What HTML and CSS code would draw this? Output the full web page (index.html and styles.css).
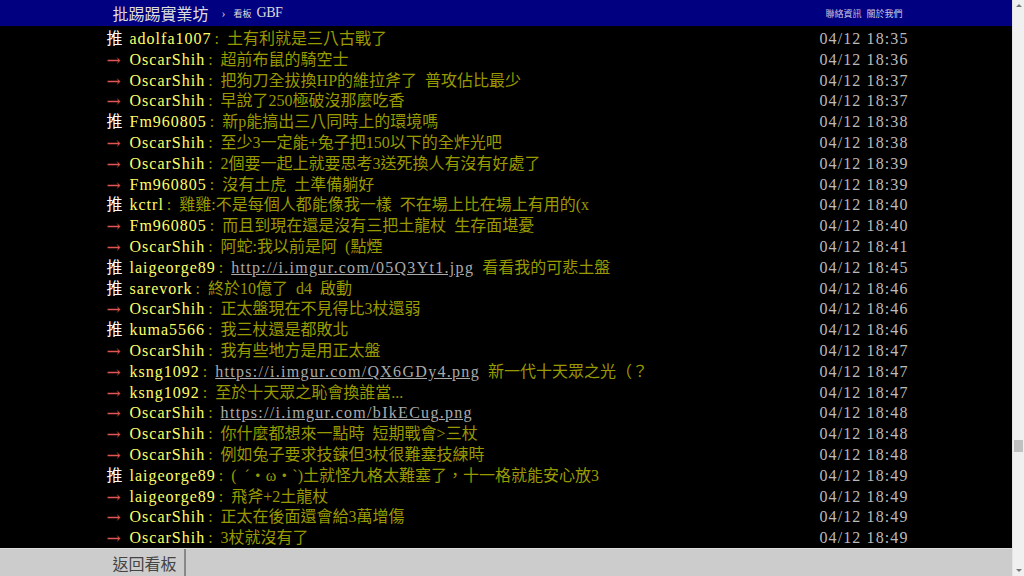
FILE: index.html
```html
<!DOCTYPE html>
<html lang="zh-Hant">
<head>
  <meta charset="UTF-8">
  <title>GBF - 批踢踢實業坊</title>
  <link rel="stylesheet" href="styles.css">
</head>
<body>
  <div class="page">
    <div id="topbar">
      <div class="bar">
        <a class="logo" href="#">批踢踢實業坊</a>
        <span class="caret">›</span>
        <a class="board" href="#"><span class="board-label">看板</span> GBF</a>
        <div class="right">
          <a href="#">聯絡資訊</a>
          <a href="#">關於我們</a>
        </div>
      </div>
    </div>

    <div id="main">
      <div class="container">
        <div class="push"><span class="push-tag">推</span><span class="push-userid">adolfa1007</span><span class="push-content">: 土有利就是三八古戰了</span><span class="push-ipdatetime">04/12 18:35</span></div>
        <div class="push"><span class="push-tag arrow">→</span><span class="push-userid">OscarShih</span><span class="push-content">: 超前布鼠的騎空士</span><span class="push-ipdatetime">04/12 18:36</span></div>
        <div class="push"><span class="push-tag arrow">→</span><span class="push-userid">OscarShih</span><span class="push-content">: 把狗刀全拔換HP的維拉斧了 普攻佔比最少</span><span class="push-ipdatetime">04/12 18:37</span></div>
        <div class="push"><span class="push-tag arrow">→</span><span class="push-userid">OscarShih</span><span class="push-content">: 早說了250極破沒那麼吃香</span><span class="push-ipdatetime">04/12 18:37</span></div>
        <div class="push"><span class="push-tag">推</span><span class="push-userid">Fm960805</span><span class="push-content">: 新p能搞出三八同時上的環境嗎</span><span class="push-ipdatetime">04/12 18:38</span></div>
        <div class="push"><span class="push-tag arrow">→</span><span class="push-userid">OscarShih</span><span class="push-content">: 至少3一定能+兔子把150以下的全炸光吧</span><span class="push-ipdatetime">04/12 18:38</span></div>
        <div class="push"><span class="push-tag arrow">→</span><span class="push-userid">OscarShih</span><span class="push-content">: 2個要一起上就要思考3送死換人有沒有好處了</span><span class="push-ipdatetime">04/12 18:39</span></div>
        <div class="push"><span class="push-tag arrow">→</span><span class="push-userid">Fm960805</span><span class="push-content">: 沒有土虎 土準備躺好</span><span class="push-ipdatetime">04/12 18:39</span></div>
        <div class="push"><span class="push-tag">推</span><span class="push-userid">kctrl</span><span class="push-content">: 雞雞:不是每個人都能像我一樣 不在場上比在場上有用的(x</span><span class="push-ipdatetime">04/12 18:40</span></div>
        <div class="push"><span class="push-tag arrow">→</span><span class="push-userid">Fm960805</span><span class="push-content">: 而且到現在還是沒有三把土龍杖 生存面堪憂</span><span class="push-ipdatetime">04/12 18:40</span></div>
        <div class="push"><span class="push-tag arrow">→</span><span class="push-userid">OscarShih</span><span class="push-content">: 阿蛇:我以前是阿 (點煙</span><span class="push-ipdatetime">04/12 18:41</span></div>
        <div class="push"><span class="push-tag">推</span><span class="push-userid">laigeorge89</span><span class="push-content">: <a href="#">http://i.imgur.com/05Q3Yt1.jpg</a> 看看我的可悲土盤</span><span class="push-ipdatetime">04/12 18:45</span></div>
        <div class="push"><span class="push-tag">推</span><span class="push-userid">sarevork</span><span class="push-content">: 終於10億了 d4 啟動</span><span class="push-ipdatetime">04/12 18:46</span></div>
        <div class="push"><span class="push-tag arrow">→</span><span class="push-userid">OscarShih</span><span class="push-content">: 正太盤現在不見得比3杖還弱</span><span class="push-ipdatetime">04/12 18:46</span></div>
        <div class="push"><span class="push-tag">推</span><span class="push-userid">kuma5566</span><span class="push-content">: 我三杖還是都敗北</span><span class="push-ipdatetime">04/12 18:46</span></div>
        <div class="push"><span class="push-tag arrow">→</span><span class="push-userid">OscarShih</span><span class="push-content">: 我有些地方是用正太盤</span><span class="push-ipdatetime">04/12 18:47</span></div>
        <div class="push"><span class="push-tag arrow">→</span><span class="push-userid">ksng1092</span><span class="push-content">: <a href="#">https://i.imgur.com/QX6GDy4.png</a> 新一代十天眾之光（？</span><span class="push-ipdatetime">04/12 18:47</span></div>
        <div class="push"><span class="push-tag arrow">→</span><span class="push-userid">ksng1092</span><span class="push-content">: 至於十天眾之恥會換誰當...</span><span class="push-ipdatetime">04/12 18:47</span></div>
        <div class="push"><span class="push-tag arrow">→</span><span class="push-userid">OscarShih</span><span class="push-content">: <a href="#">https://i.imgur.com/bIkECug.png</a></span><span class="push-ipdatetime">04/12 18:48</span></div>
        <div class="push"><span class="push-tag arrow">→</span><span class="push-userid">OscarShih</span><span class="push-content">: 你什麼都想來一點時 短期戰會&gt;三杖</span><span class="push-ipdatetime">04/12 18:48</span></div>
        <div class="push"><span class="push-tag arrow">→</span><span class="push-userid">OscarShih</span><span class="push-content">: 例如兔子要求技鍊但3杖很難塞技練時</span><span class="push-ipdatetime">04/12 18:48</span></div>
        <div class="push"><span class="push-tag">推</span><span class="push-userid">laigeorge89</span><span class="push-content">: ( ˊ・ω・ˋ)土就怪九格太難塞了，十一格就能安心放3</span><span class="push-ipdatetime">04/12 18:49</span></div>
        <div class="push"><span class="push-tag arrow">→</span><span class="push-userid">laigeorge89</span><span class="push-content">: 飛斧+2土龍杖</span><span class="push-ipdatetime">04/12 18:49</span></div>
        <div class="push"><span class="push-tag arrow">→</span><span class="push-userid">OscarShih</span><span class="push-content">: 正太在後面還會給3萬增傷</span><span class="push-ipdatetime">04/12 18:49</span></div>
        <div class="push"><span class="push-tag arrow">→</span><span class="push-userid">OscarShih</span><span class="push-content">: 3杖就沒有了</span><span class="push-ipdatetime">04/12 18:49</span></div>
      </div>
    </div>

    <div id="action-bar">
      <div class="bar">
        <a class="btn" href="#">返回看板</a>
      </div>
    </div>
  </div>

  <div class="scrollbar">
    <span class="sb-arrow up"></span>
    <span class="sb-thumb"></span>
    <span class="sb-arrow down"></span>
  </div>
</body>
</html>
```

FILE: styles.css
```css
html, body {
  margin: 0;
  height: 100%;
}
body {
  background-color: #000;
  color: #ccc;
  font-family: "Liberation Serif", "Noto Sans CJK TC", serif;
  font-size: 16px;
  overflow: hidden;
}
a {
  text-decoration: none;
  color: inherit;
}
.page {
  width: 1013px;
  height: 576px;
  display: flex;
  flex-direction: column;
}
.bar {
  width: 800px;
  margin: 0 auto;
  display: flex;
  align-items: center;
}

/* top bar */
#topbar {
  height: 26px;
  background-color: #000080;
  flex-shrink: 0;
}
#topbar .bar {
  height: 26px;
  padding-left: 6px;
  padding-right: 4px;
  box-sizing: border-box;
}
.logo {
  color: #ddd;
  font-size: 16px;
}
.caret {
  color: #ccc;
  font-size: 12px;
  margin: 0 8px 0 13px;
}
.board {
  color: #ddd;
  font-size: 14px;
  letter-spacing: -0.5px;
}
.board-label {
  font-size: 9px;
  margin-right: 2px;
  letter-spacing: 0;
}
.right {
  margin-left: auto;
  display: flex;
  gap: 5px;
}
.right a {
  color: #c8c8e6;
  font-size: 9px;
}

/* comments */
#main {
  flex: 1;
  overflow: hidden;
  padding-top: 3px;
}
.container {
  width: 800px;
  margin: 0 auto;
}
.push {
  display: flex;
  height: 20.8px;
  line-height: 20.8px;
  white-space: nowrap;
}
.push-tag {
  display: inline-block;
  width: 23px;
  color: #fff;
}
.push-tag.arrow {
  color: #d55;
  font-family: "DejaVu Serif", serif;
  font-size: 17px;
}
.push-userid {
  color: #ff6;
  letter-spacing: 1px;
}
.push-content {
  color: #990;
  margin-left: 3px;
  word-spacing: 4px;
}
.push-content a {
  color: #aaa;
  text-decoration: underline;
  letter-spacing: 1.3px;
}
.push-ipdatetime {
  margin-left: auto;
  margin-right: -2px;
  color: #bbb;
  letter-spacing: 1.1px;
}

/* bottom bar */
#action-bar {
  height: 27px;
  background-color: #ccc;
  border-top: 1px solid #ddd;
  flex-shrink: 0;
}
#action-bar .bar {
  height: 27px;
  align-items: stretch;
}
.btn {
  display: flex;
  align-items: center;
  padding: 0 7px 0 6px;
  border-right: 2px solid #888;
  color: #444;
  font-size: 16px;
}

/* fake window scrollbar */
.scrollbar {
  position: fixed;
  top: 0;
  right: 0;
  width: 11px;
  height: 576px;
  background-color: #f0f0f0;
  border-left: 1px solid #e4e4e4;
}
.sb-thumb {
  position: absolute;
  left: 1px;
  top: 440px;
  width: 9px;
  height: 12px;
  background-color: #c1c1c1;
}
.sb-arrow {
  position: absolute;
  left: 3px;
  width: 0;
  height: 0;
  border-left: 3px solid transparent;
  border-right: 3px solid transparent;
}
.sb-arrow.up {
  top: 4px;
  border-bottom: 3px solid #777;
}
.sb-arrow.down {
  bottom: 4px;
  border-top: 3px solid #777;
}
```
